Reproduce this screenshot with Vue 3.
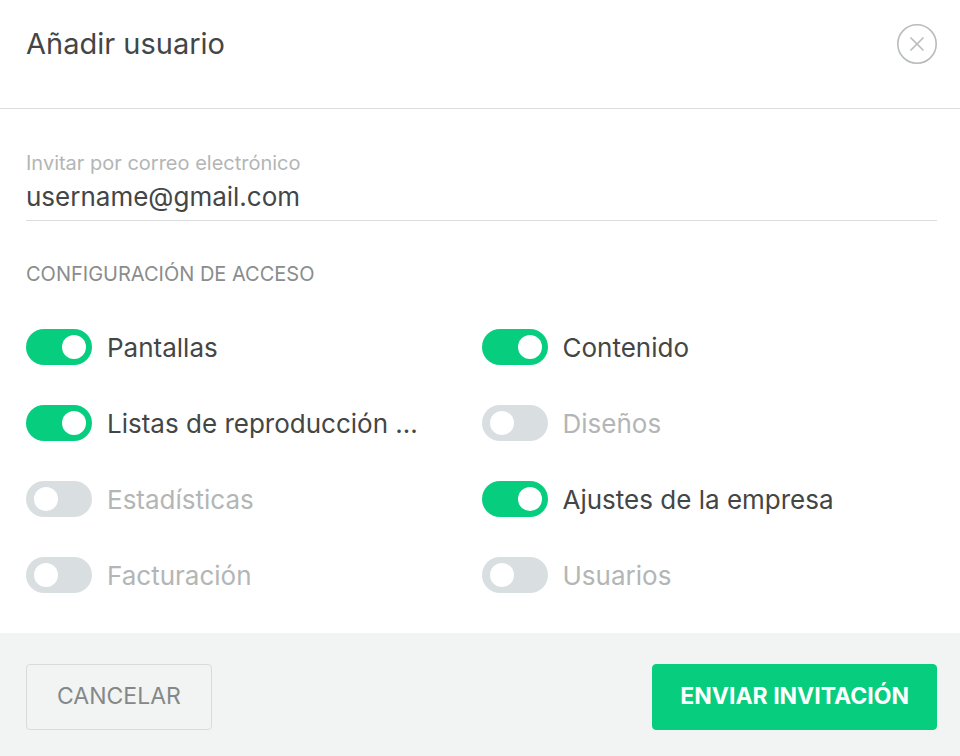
<script setup>
import { ref } from "vue";

const email = ref("username@gmail.com");

const permissions = ref([
  { id: "screens", label: "Pantallas", enabled: true },
  { id: "content", label: "Contenido", enabled: true },
  { id: "playlists", label: "Listas de reproducción ...", enabled: true },
  { id: "layouts", label: "Diseños", enabled: false },
  { id: "stats", label: "Estadísticas", enabled: false },
  { id: "company", label: "Ajustes de la empresa", enabled: true },
  { id: "billing", label: "Facturación", enabled: false },
  { id: "users", label: "Usuarios", enabled: false },
]);
</script>

<template>
  <form class="modal" @submit.prevent>
    <header class="header">
      <h1>Añadir usuario</h1>
      <button type="button" class="close" aria-label="Cerrar">
        <svg viewBox="0 0 40 40" width="40" height="40" fill="none" stroke="#b9bcbc">
          <circle cx="20" cy="20" r="19.2" stroke-width="1.6" />
          <path d="M13.5 13.5l13 13M26.5 13.5l-13 13" stroke-width="1.6" />
        </svg>
      </button>
    </header>

    <div class="body">
      <div class="field">
        <label for="email">Invitar por correo electrónico</label>
        <input id="email" v-model="email" type="email" />
      </div>

      <h2>Configuración de acceso</h2>

      <div class="permissions">
        <label
          v-for="item in permissions"
          :key="item.id"
          class="permission"
          :class="{ active: item.enabled }"
        >
          <input v-model="item.enabled" type="checkbox" class="switch" />
          <span>{{ item.label }}</span>
        </label>
      </div>
    </div>

    <footer class="footer">
      <button type="button" class="btn">Cancelar</button>
      <button type="submit" class="btn primary">Enviar invitación</button>
    </footer>
  </form>
</template>

<style>
body {
  background-color: #fff;
}
</style>

<style scoped>
.modal {
  display: flex;
  flex-direction: column;
  min-height: 100vh;
  font-family: Inter, sans-serif;
  color: #444646;
}

.modal * {
  box-sizing: border-box;
}

.header {
  display: flex;
  align-items: flex-start;
  justify-content: space-between;
  padding: 24px 23px 44px 26px;
  border-bottom: 1px solid #dcdede;
}

h1 {
  margin: 0;
  font-size: 29px;
  font-weight: 400;
  line-height: 40px;
}

.close {
  width: 40px;
  height: 40px;
  padding: 0;
  border: none;
  background: none;
  cursor: pointer;
}

.close svg {
  display: block;
}

.body {
  flex: 1;
  padding: 42px 23px 40px 26px;
}

.field {
  display: flex;
  flex-direction: column;
  border-bottom: 1px solid #dcdede;
}

.field label {
  font-size: 20px;
  line-height: 24px;
  color: #b3b6b5;
}

.field input {
  width: 100%;
  height: 45px;
  padding: 0 0 2px;
  border: none;
  outline: none;
  background: none;
  font: inherit;
  font-size: 26px;
  color: inherit;
}

h2 {
  margin: 41px 0 0;
  font-size: 20px;
  font-weight: 400;
  line-height: 24px;
  text-transform: uppercase;
  color: #8a8d8d;
}

.permissions {
  display: grid;
  grid-template-columns: 1fr 1fr;
  row-gap: 40px;
  margin-top: 43px;
}

.permission {
  display: flex;
  align-items: center;
  gap: 15px;
  height: 36px;
  font-size: 26px;
  line-height: 34px;
  white-space: nowrap;
  color: #b3b6b5;
  cursor: pointer;
}

.permission.active {
  color: #444646;
}

.permission span {
  padding-top: 2px;
}

.switch {
  display: flex;
  align-items: center;
  flex: none;
  width: 66px;
  height: 36px;
  margin: 0;
  padding: 0 6px 0 8px;
  border-radius: 18px;
  background-color: #d9dfe1;
  appearance: none;
  cursor: pointer;
}

.switch::before {
  content: "";
  width: 24px;
  height: 24px;
  border-radius: 50%;
  background-color: #fff;
}

.switch:checked {
  justify-content: flex-end;
  background-color: #07ce7e;
}

.footer {
  display: flex;
  justify-content: space-between;
  padding: 31px 23px 26px 26px;
  background-color: #f2f4f4;
}

.btn {
  height: 66px;
  padding: 0 30px 2px;
  border: 1px solid #d7dbdb;
  border-radius: 4px;
  background: none;
  font: inherit;
  font-size: 23px;
  text-transform: uppercase;
  color: #858888;
  cursor: pointer;
}

.btn.primary {
  padding: 0 27px 2px;
  border-color: #07ce7e;
  background-color: #07ce7e;
  font-weight: 700;
  color: #fff;
}
</style>
